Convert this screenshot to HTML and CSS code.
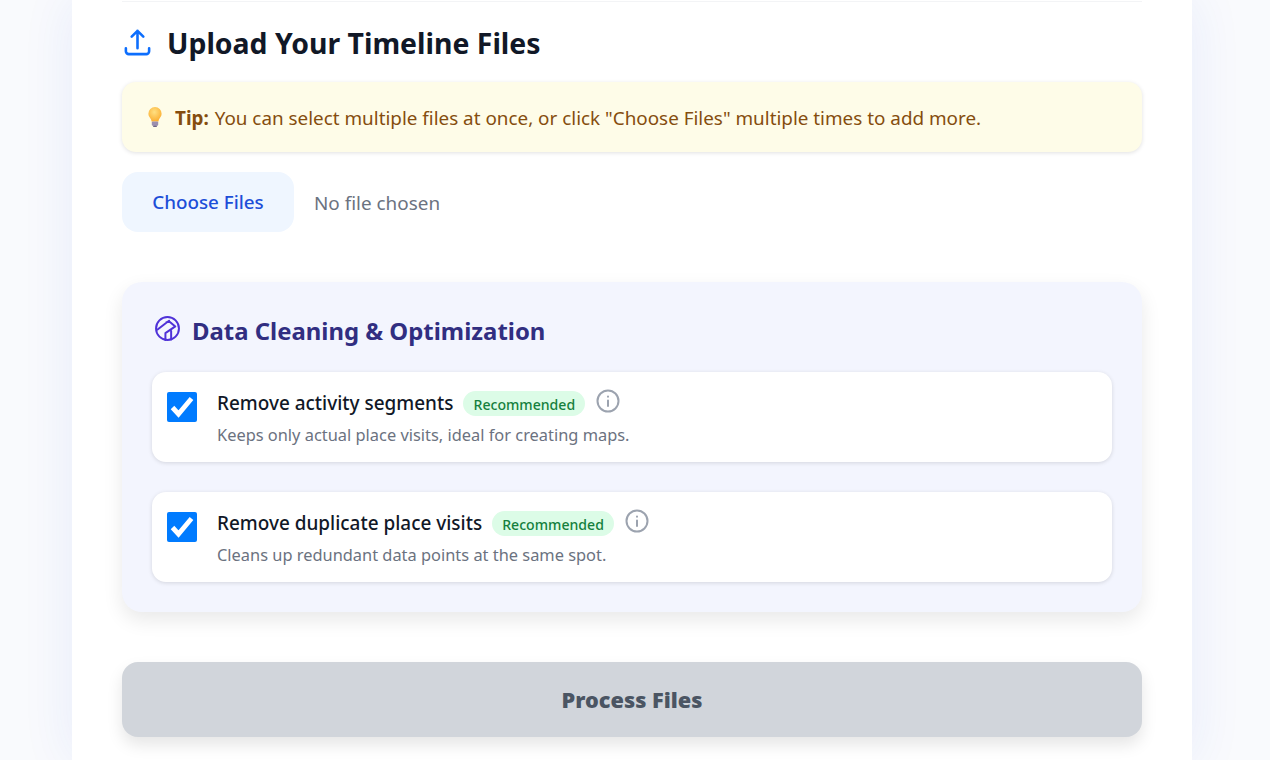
FILE: index.html
```html
<!DOCTYPE html>
<html lang="en">
<head>
<meta charset="utf-8">
<title>Upload Your Timeline Files</title>
<link rel="stylesheet" href="styles.css">
</head>
<body>
<main class="container">
  <section class="upload">
    <h2 class="title">
      <svg class="title-icon" viewBox="0 0 24 24" fill="none" stroke="currentColor" stroke-width="2" stroke-linecap="round" stroke-linejoin="round"><path d="M3 16.5v2.25A2.25 2.25 0 0 0 5.25 21h13.5A2.25 2.25 0 0 0 21 18.75V16.5m-13.5-9L12 3m0 0 4.5 4.5M12 3v13.5"/></svg>
      <span>Upload Your Timeline Files</span>
    </h2>
    <div class="tip">
      <svg class="bulb" viewBox="0 0 16 22"><defs><radialGradient id="b" cx=".45" cy=".35" r=".7"><stop offset="0" stop-color="#ffe082"/><stop offset="1" stop-color="#fbab2c"/></radialGradient></defs><path d="M8 1a6.6 6.6 0 0 0-6.6 6.7c0 2.6 1.6 3.8 2.5 5.6.4.8.5 1.4.6 2.2h7c.1-.8.2-1.4.6-2.2.9-1.8 2.5-3 2.5-5.6A6.6 6.6 0 0 0 8 1z" fill="url(#b)"/><rect x="4.8" y="15.5" width="6.4" height="4.2" rx="1" fill="#9b8fb0"/><rect x="6" y="19.5" width="4" height="1.6" rx=".8" fill="#6f6488"/></svg>
      <span><strong class="tip-label">Tip:</strong> You can select multiple files at once, or click "Choose Files" multiple times to add more.</span>
    </div>
    <div class="file-row">
      <button class="choose" type="button">Choose Files</button>
      <span class="no-file">No file chosen</span>
    </div>
    <section class="options">
      <h3 class="options-title">
        <svg class="options-icon" viewBox="0 0 24 24" fill="none" stroke="currentColor" stroke-width="1.9" stroke-linecap="round" stroke-linejoin="round"><circle cx="12" cy="12" r="11"/><path d="M2.5 13 11.5 6 13.5 4.5M11 6l3-.5 5.5 4.5-9.5 6.5v6.5M15.5 14.5v8"/></svg>
        <span>Data Cleaning &amp; Optimization</span>
      </h3>
      <div class="option">
        <span class="check"><svg viewBox="0 0 30 30" fill="none" stroke="#fff" stroke-width="4.8"><path d="M5.5 15.5l6 6.5L24.5 6.5"/></svg></span>
        <div class="option-text">
          <div class="option-head">
            <span class="option-name">Remove activity segments</span>
            <span class="badge">Recommended</span>
            <svg class="info" viewBox="0 0 24 24" fill="none" stroke="currentColor" stroke-width="2" stroke-linecap="round"><circle cx="12" cy="12" r="10.5"/><path d="M12 11.5v5.5M12 7.6v.1"/></svg>
          </div>
          <p class="option-desc">Keeps only actual place visits, ideal for creating maps.</p>
        </div>
      </div>
      <div class="option">
        <span class="check"><svg viewBox="0 0 30 30" fill="none" stroke="#fff" stroke-width="4.8"><path d="M5.5 15.5l6 6.5L24.5 6.5"/></svg></span>
        <div class="option-text">
          <div class="option-head">
            <span class="option-name">Remove duplicate place visits</span>
            <span class="badge">Recommended</span>
            <svg class="info" viewBox="0 0 24 24" fill="none" stroke="currentColor" stroke-width="2" stroke-linecap="round"><circle cx="12" cy="12" r="10.5"/><path d="M12 11.5v5.5M12 7.6v.1"/></svg>
          </div>
          <p class="option-desc">Cleans up redundant data points at the same spot.</p>
        </div>
      </div>
    </section>
    <button class="process" type="button">Process Files</button>
  </section>
</main>
</body>
</html>
```

FILE: styles.css
```css
* { box-sizing: border-box; }
html, body { margin: 0; height: 760px; overflow: hidden; }
body {
  font-family: "Noto Sans", sans-serif;
  background: #f9fafd;
}
.container {
  width: 1120px;
  height: 760px;
  margin-left: 72px;
  padding: 1px 50px 0;
  background: #fff;
  box-shadow: 0 0 50px rgba(30, 80, 220, .085);
}
.upload { border-top: 1px solid #f3f4f6; padding-top: 21px; }
.title {
  display: flex;
  align-items: center;
  gap: 14px;
  margin: 0;
  height: 40px;
  font-size: 28.4px;
  font-weight: 700;
  color: #111827;
}
.title-icon { width: 31px; height: 31px; color: #0d6efd; flex: none; margin-top: -2px; }
.tip {
  display: flex;
  align-items: center;
  gap: 12px;
  height: 70px;
  margin-top: 19px;
  padding: 2px 24px 0 25px;
  border-radius: 14px;
  background: #fefce8;
  box-shadow: 0 1px 4px rgba(0,0,0,.12);
  font-size: 18.88px;
  color: #854d0e;
}
.tip-label { margin-right: 1px; }
.bulb { width: 16px; height: 22px; flex: none; margin-top: -3px; }
.file-row { display: flex; align-items: center; gap: 20px; margin-top: 20px; }
.choose {
  width: 172px;
  height: 60px;
  padding: 0;
  border: 0;
  border-radius: 16px;
  background: #eff6ff;
  color: #1d4ed8;
  font: 550 18.8px "Noto Sans", sans-serif;
}
.no-file { padding-top: 2px; font-size: 18.9px; color: #6b7280; }
.options {
  margin-top: 50px;
  padding: 30px;
  height: 330px;
  border-radius: 20px;
  background: #f3f5fe;
  box-shadow: 0 8px 20px rgba(0,0,0,.09);
}
.options-title {
  display: flex;
  align-items: center;
  gap: 12px;
  margin: 0 0 22px;
  height: 36px;
  font-size: 23.9px;
  font-weight: 700;
  color: #312e81;
}
.options-icon { width: 25px; height: 25px; margin: -3px 0 0 3px; color: #4f32d8; flex: none; }
.option {
  display: flex;
  gap: 20px;
  height: 90px;
  margin-bottom: 30px;
  padding: 20px 15px 0;
  border-radius: 14px;
  background: #fff;
  box-shadow: 0 1px 4px rgba(0,0,0,.13);
}
.options-title + .option { margin-top: 24px; }
.check {
  width: 30px;
  height: 30px;
  flex: none;
  border-radius: 2px;
  background: #007bff;
}
.check svg { display: block; width: 30px; height: 30px; }
.option-head { display: flex; align-items: center; gap: 10px; height: 24px; margin-top: -1px; }
.option-name { font-size: 18.95px; font-weight: 500; color: #111827; }
.badge {
  padding: 0 10px;
  height: 25px;
  line-height: 27px;
  border-radius: 13px;
  background: #dcfce7;
  color: #15803d;
  font-size: 14.1px;
  font-weight: 500;
}
.info { width: 24px; height: 24px; color: #9ca3af; margin: -5px 0 0 1px; }
.option-desc { margin: 8px 0 0; font-size: 16.4px; line-height: 24px; color: #6b7280; }
.process {
  display: block;
  width: 100%;
  height: 75px;
  margin-top: 50px;
  border: 0;
  border-radius: 16px;
  background: #d1d5db;
  color: #4b5563;
  font: 900 21.7px "Noto Sans", sans-serif;
  box-shadow: 0 8px 16px rgba(0,0,0,.1);
}
```
